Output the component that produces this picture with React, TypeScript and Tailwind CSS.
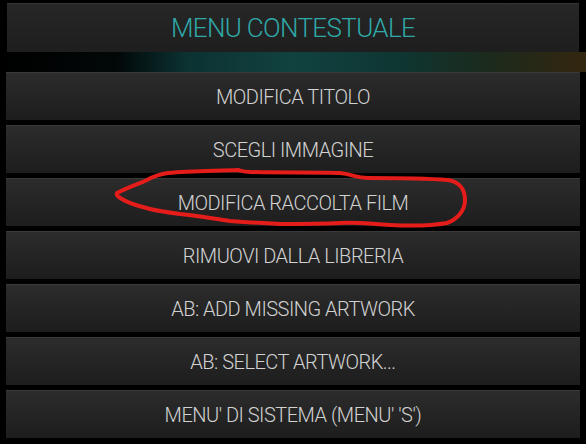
const items = [
    'MODIFICA TITOLO',
    'SCEGLI IMMAGINE',
    'MODIFICA RACCOLTA FILM',
    'RIMUOVI DALLA LIBRERIA',
    'AB: ADD MISSING ARTWORK',
    'AB: SELECT ARTWORK...',
    "MENU' DI SISTEMA (MENU' 'S')",
];

// tratto rosso disegnato a mano attorno alla terza voce
const Scribble = () => (
    <svg className="absolute left-0 top-0 pointer-events-none" width="586" height="444" viewBox="0 0 586 444">
        <path
            d="M117 193 C124 189 132 186 145 181 C152 177 158 174 168 173 C190 171 215 171 238 170 C242 171 244 172 250 172 C280 173 320 172 340 173 C352 174 356 178 368 178 C390 178 420 178 448 180 C460 182 465 190 465 200 C465 210 458 219 447 223 C430 226 410 226 390 225 C370 224 360 222 340 223 C320 224 300 224 280 224 C260 223 245 222 230 221 C215 219 200 216 180 214 C165 212 158 211 150 209 C138 206 128 203 122 199 C118 197 116 195 117 193 Z"
            fill="none"
            stroke="#e41d1b"
            strokeWidth="4"
            strokeLinejoin="round"
        />
    </svg>
);

export default function App() {
    return (
        <div
            className="relative w-[586px] h-[444px] bg-black overflow-hidden pt-[3px] px-[6px]"
            style={{ fontFamily: 'Roboto, "Open Sans", sans-serif' }}
        >
            {/* Intestazione */}
            <div className="h-[49px] mx-px flex items-center justify-center bg-gradient-to-b from-[#272727] to-[#1e1e1e] border-t border-[#333] shadow-[0_1px_0_#0a0a0a]">
                <span className="text-[26px] font-light tracking-tight text-[#2fa9a8] leading-none">MENU CONTESTUALE</span>
            </div>

            {/* sfondo visibile tra intestazione e lista */}
            <div className="h-[20px] -mx-[6px] bg-[linear-gradient(90deg,#000_0%,#020808_20%,#0c3232_32%,#114240_50%,#0e3632_68%,#1c2a1c_84%,#34260f_100%)]" />

            <div className="flex flex-col gap-[5px]">
                {items.map((label) => (
                    <div
                        key={label}
                        className="h-[48px] flex items-center justify-center bg-gradient-to-b from-[#2c2c2c] to-[#1d1d1d] border-t border-[#3a3a3a]"
                    >
                        <span className="text-[20px] font-light tracking-tight text-[#d2d2d2] leading-none">{label}</span>
                    </div>
                ))}
            </div>

            <Scribble />
        </div>
    );
}
